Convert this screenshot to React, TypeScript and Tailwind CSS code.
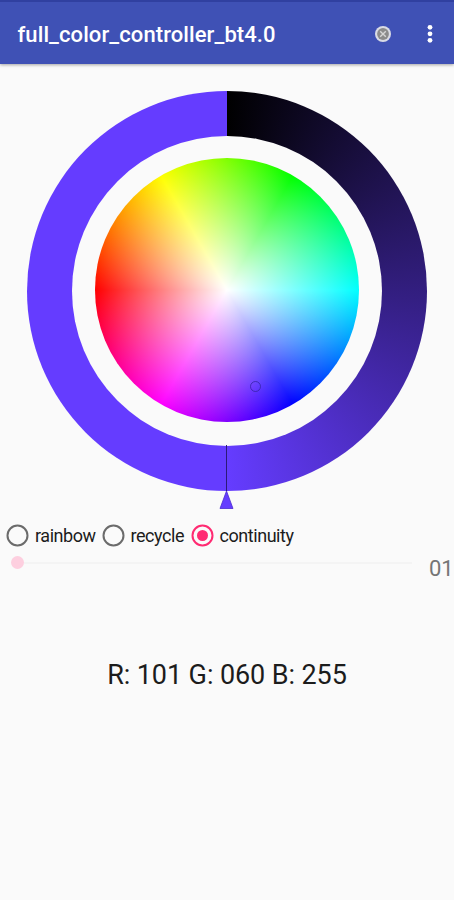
import { useState } from "react";

const modes = [
  { name: "rainbow", label: "rainbow", width: "w-[95.5px]" },
  { name: "recycle", label: "recycle", width: "w-[89px]" },
  { name: "continuity", label: "continuity", width: "w-[104px]" }
];

const pad = (value: number) => String(value).padStart(3, "0");

export default function App() {
  const [mode, setMode] = useState("continuity");
  const color = { r: 101, g: 60, b: 255 };

  return (
    <main className="flex h-[900px] w-[454px] flex-col overflow-hidden bg-[#fafafa] font-['Roboto',sans-serif] text-[#1c1c1c]">
      <Toolbar title="full_color_controller_bt4.0" />
      <ColorRing />

      <div className="mt-3 ml-[6px] flex h-[26px] items-center">
        {modes.map((item) => (
          <button key={item.name} onClick={() => setMode(item.name)} className={`flex shrink-0 items-center gap-[6px] ${item.width}`}>
            <RadioMark checked={item.name === mode} />
            <span className="pt-[2px] text-[18px] leading-6 tracking-[-0.45px] whitespace-nowrap">{item.label}</span>
          </button>
        ))}
      </div>

      <div className="mt-[2px] flex h-[30px] items-center pl-[11px]">
        <div className="-mt-[5px] h-[13px] w-[13px] rounded-full bg-[#fdcfdf]" />
        <div className="-mt-[5px] h-[2px] w-[388px] bg-[#f4f4f4]" />
        <span className="mt-[7px] ml-[17px] text-[22px] leading-6 text-[#757575]">01</span>
      </div>

      <p className="mt-[79px] text-center text-[27px] leading-8 tracking-[-0.1px] whitespace-nowrap">
        R: {pad(color.r)} G: {pad(color.g)} B: {pad(color.b)}
      </p>
    </main>
  );
}

function Toolbar({ title }: { title: string }) {
  return (
    <header className="flex h-16 shrink-0 items-center border-t-2 border-[#3040a0] bg-[#3f51b5] pt-[2px] pl-[17.5px] text-white shadow-[0_1px_3px_rgba(0,0,0,0.35)]">
      <h1 className="w-[356px] pt-px text-[22px] leading-7 font-medium tracking-[0.09px]">{title}</h1>
      <svg className="h-[18px] w-[18px]" viewBox="0 0 18 18">
        <circle cx="9" cy="9" r="8" fill="#d9dbe5" />
        <circle cx="9" cy="9" r="5.9" fill="#8b8b8b" />
        <path d="M6.2 6.2l5.6 5.6M11.8 6.2l-5.6 5.6" stroke="#d6d6d6" strokeWidth="1.4" />
      </svg>
      <svg className="ml-[34px] h-[20px] w-[8px]" viewBox="0 0 8 20">
        <circle cx="4" cy="3.3" r="2.4" fill="#fff" />
        <circle cx="4" cy="9.8" r="2.4" fill="#fff" />
        <circle cx="4" cy="16.3" r="2.4" fill="#fff" />
      </svg>
    </header>
  );
}

function ColorRing() {
  return (
    <section className="relative mt-[27px] ml-[27px] h-[419px] w-[399.5px] shrink-0">
      <div className="flex h-[399.5px] items-center justify-center rounded-full bg-[conic-gradient(#000_0deg,#653cff_180deg,#653cff_360deg)]">
        <div className="flex h-[310px] w-[310px] items-center justify-center rounded-full bg-[#fafafa]">
          <div className="mb-[2px] h-[263.5px] w-[263.5px] rounded-full bg-[radial-gradient(circle_closest-side,#fff,rgba(255,255,255,0)),conic-gradient(from_30deg,#0f0,#0ff,#00f,#f0f,#f00,#ff0,#0f0)]" />
        </div>
      </div>

      {/* selected colour */}
      <div className="absolute top-[290px] left-[223px] h-[11px] w-[11px] rounded-full border border-[#30219b]/70" />

      {/* brightness pointer */}
      <svg className="absolute top-[354px] left-[192px] h-[65px] w-[16px]" viewBox="0 0 16 65">
        <path d="M7.5 0V46" stroke="#2c1a78" strokeWidth="1" />
        <path d="M7.5 46L14 63.5H1Z" fill="#653cff" stroke="#4a2ad0" strokeWidth="0.8" />
      </svg>
    </section>
  );
}

function RadioMark({ checked }: { checked: boolean }) {
  return (
    <svg className="h-[23px] w-[23px] shrink-0" viewBox="0 0 23 23" fill="none">
      <circle cx="11.5" cy="11.5" r="10" stroke={checked ? "#ff2b72" : "#6b6b6b"} strokeWidth="2" />
      {checked ? <circle cx="11.5" cy="11.5" r="5.5" fill="#ff2b72" /> : null}
    </svg>
  );
}
